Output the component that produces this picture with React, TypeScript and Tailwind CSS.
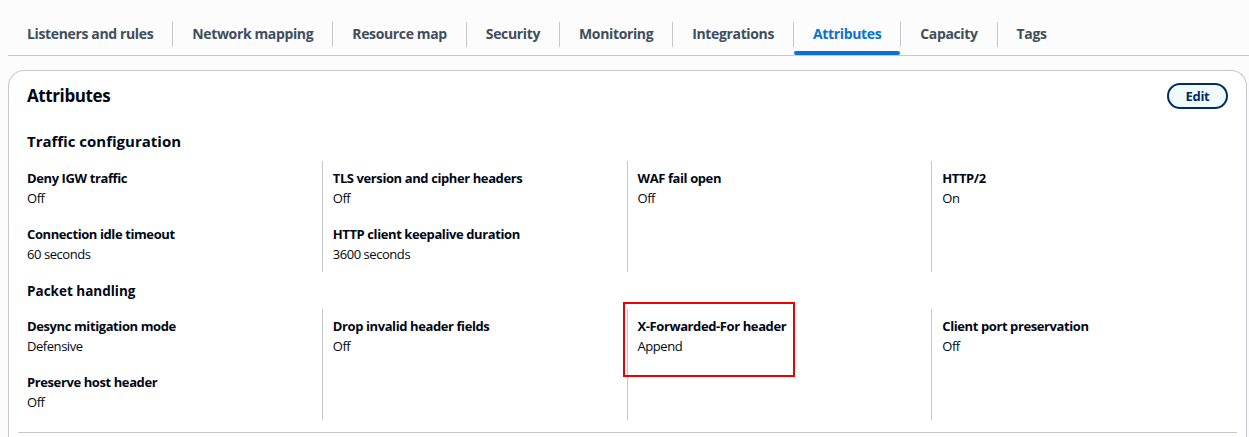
import React from "react";

const tabs = [
  "Listeners and rules",
  "Network mapping",
  "Resource map",
  "Security",
  "Monitoring",
  "Integrations",
  "Attributes",
  "Capacity",
  "Tags",
];

type KV = { label: string; value: string };

const traffic: KV[][] = [
  [
    { label: "Deny IGW traffic", value: "Off" },
    { label: "Connection idle timeout", value: "60 seconds" },
  ],
  [
    { label: "TLS version and cipher headers", value: "Off" },
    { label: "HTTP client keepalive duration", value: "3600 seconds" },
  ],
  [{ label: "WAF fail open", value: "Off" }],
  [{ label: "HTTP/2", value: "On" }],
];

const packet: KV[][] = [
  [
    { label: "Desync mitigation mode", value: "Defensive" },
    { label: "Preserve host header", value: "Off" },
  ],
  [{ label: "Drop invalid header fields", value: "Off" }],
  [{ label: "X-Forwarded-For header", value: "Append" }],
  [{ label: "Client port preservation", value: "Off" }],
];

function Grid({ cols, highlight }: { cols: KV[][]; highlight?: number }) {
  return (
    <div className="-ml-[10px] -mr-[8px] grid grid-cols-4">
      {cols.map((col, i) => (
        <div
          key={i}
          className={
            "relative pl-[10px] pr-[10px] " +
            (i === 0 ? "" : "border-l border-[#c6c6cd]")
          }
        >
          <div className="flex flex-col gap-[16px] pt-[7px] pb-[8px]">
            {col.map((kv) => (
              <div key={kv.label} className="flex flex-col">
                <div className="text-[13px] leading-[20px] font-bold tracking-[-0.4px] text-[#000716]">
                  {kv.label}
                </div>
                <div className="text-[13px] leading-[20px] tracking-[-0.45px] text-[#000716]">
                  {kv.value}
                </div>
              </div>
            ))}
          </div>
          {highlight === i && (
            <div className="pointer-events-none absolute left-[-5px] top-[-7px] w-[172px] h-[75px] border-2 border-[#ee0000]" />
          )}
        </div>
      ))}
    </div>
  );
}

export default function App() {
  return (
    <div
      className="min-h-[437px] bg-[#fcfcfc] pt-[13px]"
      style={{ fontFamily: '"Open Sans", "Noto Sans", Arial, sans-serif' }}
    >
      <div className="ml-[8px] flex border-b border-[#c6c6cd]">
        {tabs.map((t, i) => {
          const active = t === "Attributes";
          return (
            <div key={t} className="relative flex h-[42px] items-center">
              {i > 0 && <div className="h-[25px] w-px bg-[#c6c6cd]" />}
              <div
                className={
                  "px-[19px] text-[14px] font-bold leading-[20px] tracking-[-0.36px] " +
                  (active ? "text-[#0972d3]" : "text-[#414d5c]")
                }
              >
                {t}
              </div>
              {active && (
                <div className="absolute bottom-0 left-[1px] right-0 h-[4px] rounded-full bg-[#0972d3]" />
              )}
            </div>
          );
        })}
      </div>

      <div className="ml-[8px] mr-[2px] mt-[14px] rounded-t-[16px] border border-b-0 border-[#c6c6cd] bg-white px-[18px] pt-[12px]">
        <div className="flex items-center justify-between">
          <div className="text-[17px] font-bold leading-[22px] tracking-[-0.4px] text-[#000716]">
            Attributes
          </div>
          <button className="h-[26px] w-[61px] rounded-full border-2 border-[#002b66] bg-[#f0fbff] text-[13px] font-bold leading-[20px] tracking-[-0.3px] text-[#002b66]">
            Edit
          </button>
        </div>

        <div className="mt-[22px] text-[15px] font-bold leading-[20px] text-[#000716]">
          Traffic configuration
        </div>
        <div className="mt-[10px]">
          <Grid cols={traffic} />
        </div>

        <div className="mt-[9px] text-[13.5px] font-bold leading-[20px] text-[#000716]">
          Packet handling
        </div>
        <div className="mt-[8px]">
          <Grid cols={packet} highlight={2} />
        </div>

        <div className="-mx-[9px] mt-[12px] border-t border-[#c6c6cd]" />
        <div className="h-[10px]" />
      </div>
    </div>
  );
}
